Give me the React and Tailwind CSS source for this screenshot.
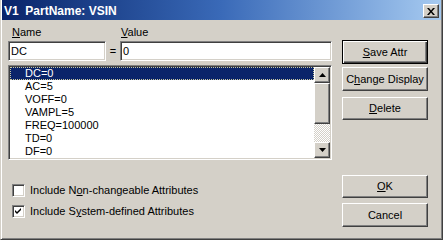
import React from "react";

const font = "font-['Liberation_Sans',Arial,sans-serif]";
const raised =
  "border border-t-white border-l-white border-r-[#404040] border-b-[#404040] shadow-[inset_-1px_-1px_#808080] bg-[#d4d0c8]";
const sunken =
  "border border-t-[#808080] border-l-[#808080] border-r-white border-b-white shadow-[inset_1px_1px_#404040,inset_-1px_-1px_#d4d0c8] bg-white";

function Btn({ children, def = false, h = "h-[23px]", mt = "" }) {
  const b = def
    ? "border border-black shadow-[inset_1px_1px_white,inset_-1px_-1px_#404040,inset_-2px_-2px_#808080] bg-[#d4d0c8]"
    : raised;
  return (
    <div className={`w-[86px] ${h} ${mt} ${b} flex items-center justify-center text-[11px] leading-[13px] text-black`}>
      {children}
    </div>
  );
}

function Check({ checked }) {
  return (
    <div className={`w-[13px] h-[13px] ${sunken} flex items-center justify-center`}>
      {checked && (
        <svg width="7" height="7" viewBox="0 0 7 7">
          <path d="M0 2 L2 4 L6 0 L6 2 L2 6 L0 4 Z" fill="#000" />
        </svg>
      )}
    </div>
  );
}

const items = ["DC=0", "AC=5", "VOFF=0", "VAMPL=5", "FREQ=100000", "TD=0", "DF=0"];

export default function App() {
  return (
    <div
      className={`${font} w-[443px] h-[240px] bg-[#d4d0c8] border-l border-r border-b border-l-[#d4d0c8] border-r-[#404040] border-b-[#404040] px-[1px] pb-[1px] shadow-[inset_1px_0_white,inset_-1px_-1px_#808080] flex flex-col overflow-hidden`}
    >
      {/* title bar */}
      <div className="h-[20px] flex items-start bg-linear-to-r from-[#0a246a] via-[#3a6ab8] to-[#a6caf0] shrink-0">
        <div className="pt-[4px] pl-[2px] text-[12px] leading-[14px] font-bold text-white whitespace-pre">
          {"V1  PartName: VSIN"}
        </div>
        <div className={`ml-auto mt-[4px] mr-[2px] w-[16px] h-[14px] ${raised} flex items-center justify-center`}>
          <svg width="8" height="7" viewBox="0 0 8 7">
            <path d="M0 0h2l2 2.5L6 0h2L5 3.5 8 7H6L4 4.5 2 7H0l3-3.5z" fill="#000" />
          </svg>
        </div>
      </div>

      {/* body */}
      <div className="flex flex-1 pl-[6px]">
        {/* left column */}
        <div className="w-[324px] flex flex-col text-[11px] leading-[13px] text-black">
          <div className="mt-[6px] h-[13px] flex">
            <div className="w-[112px] pl-[4px]">
              <span className="underline">N</span>ame
            </div>
            <div className="pl-[1px]">
              <span className="underline">V</span>alue
            </div>
          </div>
          <div className="mt-[2px] h-[20px] flex">
            <div className={`w-[98px] h-full ${sunken} flex items-center pl-[2px]`}>DC</div>
            <div className="w-[14px] flex items-center justify-center">=</div>
            <div className={`w-[212px] h-full ${sunken} flex items-center pl-[2px]`}>0</div>
          </div>
          <div className={`mt-[4px] h-[95px] ${sunken} p-[1px] flex`}>
            <div className="flex-1 flex flex-col">
              {items.map((t, i) => (
                <div
                  key={t}
                  className={`h-[13px] leading-[13px] pl-[15px] ${
                    i === 0
                      ? "bg-[#0a246a] text-white outline outline-1 outline-dotted outline-[#c8c8a0] -outline-offset-1"
                      : ""
                  }`}
                >
                  {t}
                </div>
              ))}
            </div>
            <div className="w-[16px] flex flex-col">
              <div className={`h-[16px] ${raised} flex items-center justify-center`}>
                <svg width="7" height="4" viewBox="0 0 7 4">
                  <path d="M3.5 0L7 4H0z" fill="#000" />
                </svg>
              </div>
              <div className={`h-[41px] ${raised}`} />
              <div className="flex-1 bg-[image:repeating-conic-gradient(#d4d0c8_0_25%,#ffffff_0_50%)] bg-[length:2px_2px]" />
              <div className={`h-[16px] ${raised} flex items-center justify-center`}>
                <svg width="7" height="4" viewBox="0 0 7 4">
                  <path d="M0 0H7L3.5 4z" fill="#000" />
                </svg>
              </div>
            </div>
          </div>
          <div className="mt-[24px] h-[13px] flex items-center pl-[4px] gap-[5px]">
            <Check />
            <span>
              Include N<span className="underline">o</span>n-changeable Attributes
            </span>
          </div>
          <div className="mt-[8px] h-[13px] flex items-center pl-[4px] gap-[5px]">
            <Check checked />
            <span>
              Include S<span className="underline">y</span>stem-defined Attributes
            </span>
          </div>
        </div>

        {/* right column */}
        <div className="ml-[10px] flex flex-col">
          <Btn def h="h-[24px]" mt="mt-[20px]">
            <span className="underline">S</span>ave Attr
          </Btn>
          <Btn h="h-[24px]" mt="mt-[3px]">
            C<span className="underline">h</span>ange Display
          </Btn>
          <Btn mt="mt-[6px]">
            <span className="underline">D</span>elete
          </Btn>
          <Btn mt="mt-[55px]">
            <span className="underline">O</span>K
          </Btn>
          <Btn h="h-[24px]" mt="mt-[5px]">
            Cancel
          </Btn>
        </div>
      </div>
    </div>
  );
}
